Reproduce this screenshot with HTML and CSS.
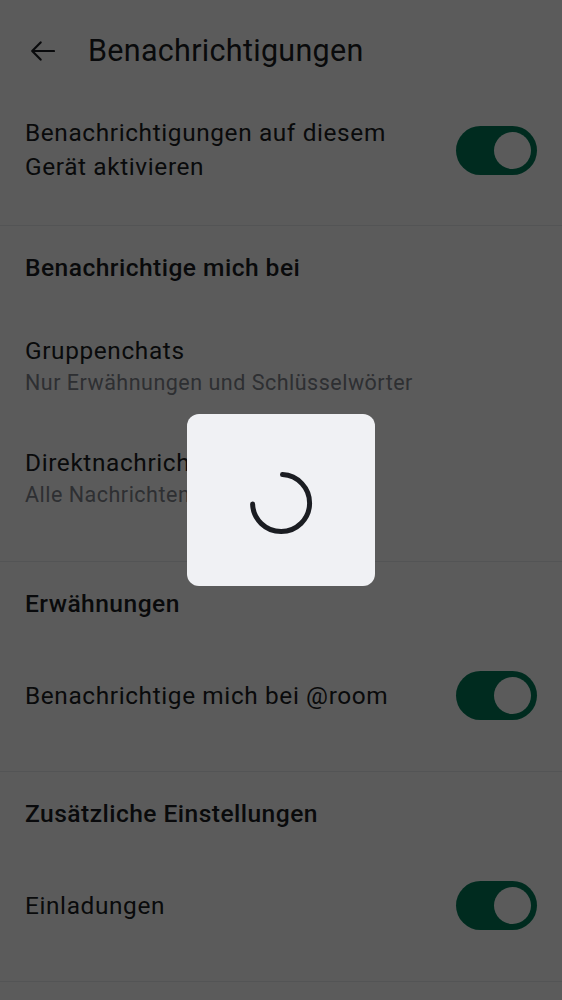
FILE: index.html
```html
<!DOCTYPE html>
<html lang="de">
<head>
<meta charset="utf-8">
<link rel="stylesheet" href="styles.css">
</head>
<body>
<div class="screen">
  <header class="topbar">
    <svg class="back" viewBox="0 0 24 24" width="24" height="24" aria-hidden="true">
      <path d="M1.2 12H23M9.6 3.4L1.2 12 9.6 20.6" fill="none" stroke="#1b1d22" stroke-width="2.2" stroke-linecap="round" stroke-linejoin="round"/>
    </svg>
    <h1 class="title">Benachrichtigungen</h1>
  </header>

  <section class="section first">
    <div class="item">
      <div class="text">
        <div class="label">Benachrichtigungen auf diesem Gerät aktivieren</div>
      </div>
      <span class="switch"><span class="thumb"></span></span>
    </div>
  </section>

  <section class="section">
    <h2 class="heading">Benachrichtige mich bei</h2>
    <div class="item">
      <div class="text">
        <div class="label">Gruppenchats</div>
        <div class="sub">Nur Erwähnungen und Schlüsselwörter</div>
      </div>
    </div>
    <div class="item">
      <div class="text">
        <div class="label">Direktnachrichten</div>
        <div class="sub">Alle Nachrichten</div>
      </div>
    </div>
  </section>

  <section class="section">
    <h2 class="heading">Erwähnungen</h2>
    <div class="item toggle">
      <div class="text">
        <div class="label">Benachrichtige mich bei @room</div>
      </div>
      <span class="switch"><span class="thumb"></span></span>
    </div>
  </section>

  <section class="section">
    <h2 class="heading">Zusätzliche Einstellungen</h2>
    <div class="item toggle">
      <div class="text">
        <div class="label">Einladungen</div>
      </div>
      <span class="switch"><span class="thumb"></span></span>
    </div>
  </section>
</div>

<div class="scrim">
  <div class="dialog">
    <svg class="spinner" viewBox="0 0 64 64" width="64" height="64" aria-hidden="true">
      <path d="M33.5 3.6 A28.5 28.5 0 1 1 3.6 33" fill="none" stroke="#1b1d22" stroke-width="5" stroke-linecap="round"/>
    </svg>
  </div>
</div>
</body>
</html>
```

FILE: styles.css
```css
html, body {
  margin: 0;
  padding: 0;
  background: #ffffff;
}

body {
  font-family: Roboto, "Noto Sans", sans-serif;
  color: #1b1d22;
  width: 562px;
  height: 1000px;
  overflow: hidden;
}

.screen {
  display: flex;
  flex-direction: column;
}

.topbar {
  height: 90px;
  display: flex;
  align-items: center;
  padding: 12px 0 0 31px;
  box-sizing: border-box;
}

.back {
  flex: none;
  margin-right: 33px;
}

.title {
  margin: 0;
  font-size: 30.5px;
  font-weight: 400;
  line-height: 36px;
  letter-spacing: 0.3px;
}

.section {
  border-bottom: 1px solid #e9ebee;
  padding: 25px 0 27px;
}

.section.first {
  padding: 2px 0 17px;
}

.heading {
  margin: 0 0 25px;
  padding: 0 24px 0 25px;
  font-size: 24.6px;
  font-weight: 500;
  line-height: 34px;
  letter-spacing: 0.45px;
}

.item {
  display: flex;
  align-items: center;
  gap: 24px;
  padding: 24px 25px;
}

.item.toggle {
  padding-top: 25px;
}

.text {
  flex: 1;
  min-width: 0;
}

.label {
  font-size: 24.4px;
  line-height: 34px;
  letter-spacing: 0.62px;
  padding-right: 40px;
}

.sub {
  font-size: 21.5px;
  line-height: 30px;
  letter-spacing: 0.5px;
  color: #80858d;
}

.switch {
  flex: none;
  width: 81px;
  height: 49px;
  border-radius: 25px;
  background: #007a58;
  display: flex;
  align-items: center;
  justify-content: flex-end;
  padding-right: 6px;
  box-sizing: border-box;
}

.thumb {
  width: 37px;
  height: 37px;
  border-radius: 50%;
  background: #ffffff;
}

.scrim {
  position: fixed;
  inset: 0;
  background: rgba(0, 0, 0, 0.643);
  display: flex;
  align-items: center;
  justify-content: center;
}

.dialog {
  width: 188px;
  height: 172px;
  border-radius: 12px;
  background: #f0f1f4;
  display: flex;
  align-items: center;
  justify-content: center;
}

.spinner {
  margin-top: 5px;
}
```
